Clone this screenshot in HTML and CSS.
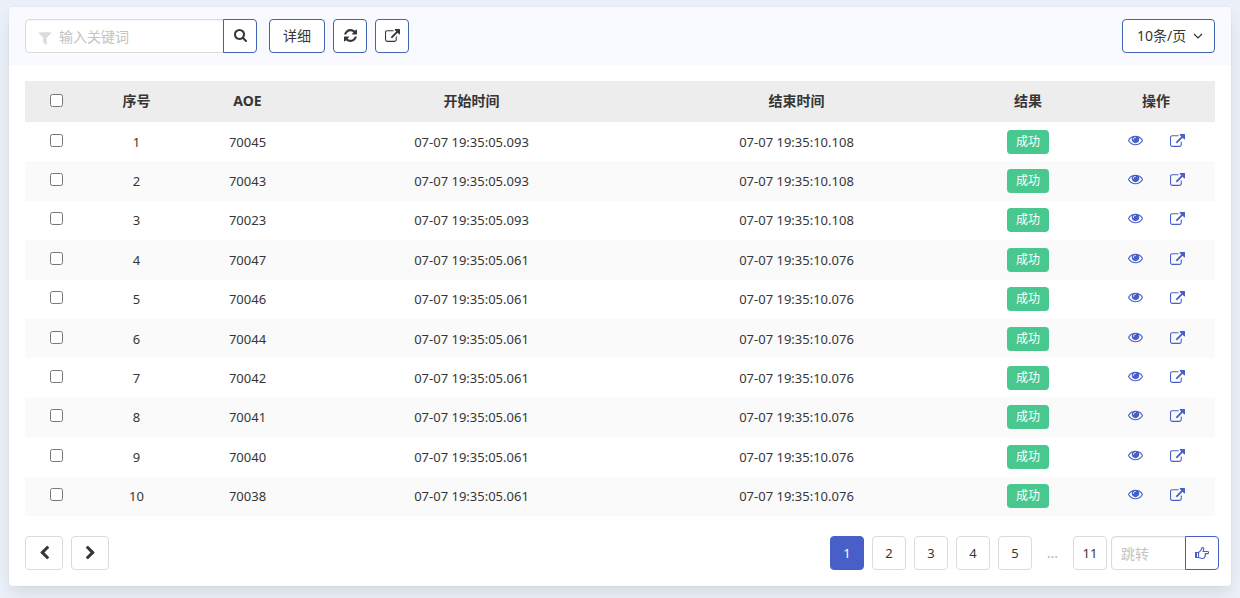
FILE: index.html
```html
<!DOCTYPE html>
<html lang="zh-CN">
<head>
<meta charset="utf-8">
<title>AOE</title>
<link rel="stylesheet" href="styles.css">
</head>
<body>
<svg class="sprite" aria-hidden="true">
  <symbol id="i-filter" viewBox="0 0 1792 1792"><path d="M1595 295q17 41-14 70l-493 493v742q0 42-39 59-13 5-25 5-27 0-45-19l-256-256q-19-19-19-45V858L211 365q-31-29-14-70 17-39 59-39h1280q42 0 59 39z"/></symbol>
  <symbol id="i-search" viewBox="64 128 1664 1664"><path d="M1216 832q0-185-131.5-316.5T768 384 451.5 515.5 320 832t131.5 316.5T768 1280t316.5-131.5T1216 832zm512 832q0 52-38 90t-90 38q-54 0-90-38l-343-342q-179 124-399 124-143 0-273.5-55.5t-225-150-150-225T64 832t55.5-273.5 150-225 225-150T768 128t273.5 55.5 225 150 150 225T1472 832q0 220-124 399l343 343q37 37 37 90z"/></symbol>
  <symbol id="i-refresh" viewBox="128 128 1536 1536"><path d="M1639 1056q0 5-1 7-64 268-268 434.5T892 1664q-146 0-282.5-55T366 1452l-129 129q-19 19-45 19t-45-19-19-45v-448q0-26 19-45t45-19h448q26 0 45 19t19 45-19 45l-137 137q71 66 161 102t187 36q134 0 250-65t186-179q11-17 53-117 8-23 30-23h192q13 0 22.5 9.5t9.5 22.5zm25-800v448q0 26-19 45t-45 19h-448q-26 0-45-19t-19-45 19-45l138-138Q1097 384 896 384q-134 0-250 65T460 628q-11 17-53 117-8 23-30 23H178q-13 0-22.5-9.5T146 736v-7q65-268 270-434.5T896 128q146 0 284 55.5T1425 340l130-129q19-19 45-19t45 19 19 45z"/></symbol>
  <symbol id="i-external" viewBox="0 0 1792 1536"><path d="M1408 928v320q0 119-84.5 203.5T1120 1536H288q-119 0-203.5-84.5T0 1248V416q0-119 84.5-203.5T288 128h704q14 0 23 9t9 23v64q0 14-9 23t-23 9H288q-66 0-113 47t-47 113v832q0 66 47 113t113 47h832q66 0 113-47t47-113V928q0-14 9-23t23-9h64q14 0 23 9t9 23zm384-864v512q0 26-19 45t-45 19-45-19l-176-176-652 652q-10 10-23 10t-23-10L695 983q-10-10-10-23t10-23l652-652-176-176q-19-19-19-45t19-45 45-19h512q26 0 45 19t19 45z"/></symbol>
  <symbol id="i-eye" viewBox="0 384 1792 1152"><path d="M1664 960q-152-236-381-353 61 104 61 225 0 185-131.5 316.5T896 1280t-316.5-131.5T448 832q0-121 61-225-229 117-381 353 133 205 333.5 326.5T896 1408t434.5-121.5T1664 960zM944 576q0-20-14-34t-34-14q-125 0-214.5 89.5T592 832q0 20 14 34t34 14 34-14 14-34q0-86 61-147t147-61q20 0 34-14t14-34zm848 384q0 34-20 69-140 230-376.5 368.5T896 1536t-499.5-139T20 1029q-20-35-20-69t20-69q140-229 376.5-368T896 384t499.5 139T1772 891q20 35 20 69z"/></symbol>
  <symbol id="i-left" viewBox="0 0 1792 1664"><path d="M1427 301l-531 531 531 531q19 19 19 45t-19 45l-166 166q-19 19-45 19t-45-19L429 877q-19-19-19-45t19-45l742-742q19-19 45-19t45 19l166 166q19 19 19 45t-19 45z"/></symbol>
  <symbol id="i-right" viewBox="0 0 1792 1664"><path d="M1363 877l-742 742q-19 19-45 19t-45-19l-166-166q-19-19-19-45t19-45l531-531-531-531q-19-19-19-45t19-45L531 45q19-19 45-19t45 19l742 742q19 19 19 45t-19 45z"/></symbol>
  <symbol id="i-hand" viewBox="0 0 14 12"><path d="M.5 5.500h3v5h-3zM3.500 5.500C5 5 5.500 3.500 6.300 2.700 6.800 2 6.500.600 7.400.600c1.200 0 1.500.900 1.300 1.700L8 4.500h4.500a1 1 0 0 1 0 2.100H10c.8.500.7 1.500 0 1.900.4.700.1 1.300-.6 1.600 0 .9-.6 1.400-1.600 1.400-2 0-2.800-1-4.300-1" fill="none" stroke="currentColor" stroke-width="1.100" stroke-linejoin="round"/><path d="M.5 5.500h1.500v5H.5z"/></symbol>
  <symbol id="i-caret" viewBox="0 0 10 6"><path d="M1 1l4 4 4-4" fill="none" stroke="currentColor" stroke-width="1.200"/></symbol>
</svg>

<main class="card">
  <header class="toolbar">
    <form class="search">
      <svg class="icon search-filter"><use href="#i-filter"/></svg>
      <input class="input search-input" type="text" placeholder="输入关键词" aria-label="输入关键词">
      <button class="button square joined" type="button" aria-label="搜索"><svg class="icon"><use href="#i-search"/></svg></button>
    </form>
    <div class="actions">
      <button class="button" type="button">详细</button>
      <button class="button square" type="button" aria-label="刷新"><svg class="icon"><use href="#i-refresh"/></svg></button>
      <button class="button square" type="button" aria-label="导出"><svg class="icon wide"><use href="#i-external"/></svg></button>
    </div>
    <div class="page-size">
      <select class="select" aria-label="每页条数"><option>10条/页</option><option>20条/页</option><option>50条/页</option></select>
      <svg class="caret"><use href="#i-caret"/></svg>
    </div>
  </header>

  <div class="content">
    <table class="table">
      <colgroup><col class="c-check"><col class="c-no"><col class="c-aoe"><col><col><col class="c-result"><col class="c-ops"></colgroup>
      <thead>
        <tr><th><input class="check" type="checkbox" aria-label="全选"></th><th>序号</th><th>AOE</th><th>开始时间</th><th>结束时间</th><th>结果</th><th>操作</th></tr>
      </thead>
      <tbody id="rows"></tbody>
    </table>
  </div>

  <footer class="footer">
    <div class="steps">
      <button class="button page step" type="button" aria-label="上一页"><svg class="icon"><use href="#i-left"/></svg></button>
      <button class="button page step" type="button" aria-label="下一页"><svg class="icon"><use href="#i-right"/></svg></button>
    </div>
    <nav class="pages" aria-label="分页">
      <button class="button page current" type="button" aria-current="page">1</button>
      <button class="button page" type="button">2</button>
      <button class="button page" type="button">3</button>
      <button class="button page" type="button">4</button>
      <button class="button page" type="button">5</button>
      <span class="ellipsis">...</span>
      <button class="button page" type="button">11</button>
    </nav>
    <form class="jump">
      <input class="input jump-input" type="text" placeholder="跳转" aria-label="跳转">
      <button class="button square joined go" type="button" aria-label="跳转到页"><svg class="icon hand"><use href="#i-hand"/></svg></button>
    </form>
  </footer>
</main>
<script src="app.js"></script>
</body>
</html>
```

FILE: styles.css
```css
* { box-sizing: border-box; }

body {
  margin: 0;
  padding: 7px 9px 12px;
  background: #ebf0f8;
  color: #363636;
  font: 14px/20px "Noto Sans", "Noto Sans CJK SC", sans-serif;
}

.sprite { position: absolute; width: 0; height: 0; }

.card {
  background: #fff;
  border-radius: 4px;
  box-shadow: 0 8px 16px -2px rgba(10, 10, 10, .1), 0 0 0 1px rgba(10, 10, 10, .02);
}

.toolbar {
  display: flex;
  gap: 12px;
  padding: 12px 16px;
  background: #f8faff;
  border-radius: 4px 4px 0 0;
}

.search, .jump { display: flex; position: relative; }
.actions, .steps, .pages { display: flex; gap: 8px; }

.input, .button, .select {
  height: 34px;
  margin: 0;
  border: 1px solid #dbdbdb;
  border-radius: 4px;
  background: #fff;
  color: #363636;
  font: inherit;
}

.input {
  border-radius: 4px 0 0 4px;
  box-shadow: inset 0 1px 2px rgba(10, 10, 10, .05);
  outline: none;
}
.input::placeholder { color: #c3c3c3; }
.search-input { width: 199px; padding: 0 8px 0 33px; }
.jump-input { width: 75px; padding: 0 9px; }

.button {
  display: flex;
  align-items: center;
  justify-content: center;
  padding: 0 13px;
  border-color: #4164b0;
}
.square { width: 34px; padding: 0 0 1px; }
.joined { margin-left: -1px; border-radius: 0 4px 4px 0; }

.icon { display: block; width: 13px; height: 13px; fill: currentColor; }
.wide { width: 15px; }
.search-filter {
  position: absolute;
  top: 11px;
  left: 12px;
  width: 16px;
  height: 16px;
  color: #dbdbdb;
}

.page-size { position: relative; margin-left: auto; }
.select {
  appearance: none;
  display: block;
  padding: 0 27px 0 14px;
  border-color: #4164b0;
}
.caret {
  position: absolute;
  top: 14px;
  right: 12px;
  width: 10px;
  height: 6px;
  pointer-events: none;
}

.content { padding: 16px 16px 20px; }

.table {
  width: 100%;
  height: 435px;
  table-layout: fixed;
  border-collapse: collapse;
  text-align: center;
}
.c-check { width: 62px; }
.c-no { width: 99px; }
.c-aoe { width: 123px; }
.c-result { width: 138px; }
.c-ops { width: 118px; }

.table th, .table td { padding: 0; vertical-align: middle; }
.table thead { background: #ededed; }
.table th { height: 41px; padding-bottom: 2px; font-weight: 700; }
.table td { font-size: 13px; }
.table tbody tr:nth-child(even) { background: #fafafa; }

.check { display: block; width: 13px; height: 13px; margin: 0 auto; }
td .check { margin-bottom: 3px; }

.tag {
  display: inline-block;
  padding: 0 9px;
  border-radius: 4px;
  background: #48c78e;
  color: #fff;
  font-size: 12px;
  line-height: 24px;
  vertical-align: middle;
}

.ops { display: flex; align-items: center; justify-content: center; gap: 27px; padding-bottom: 3px; }
.ops a { color: #485fc7; }
.ops .icon { width: 15px; }

.footer {
  display: flex;
  gap: 4px;
  padding: 0 12px 16px 16px;
}
.pages { margin-left: auto; }
.page { min-width: 34px; padding: 0 8px; border-color: #dbdbdb; font-size: 13px; }
.step { width: 38px; padding: 0 8px 2px; }
.step .icon { width: 15px; height: 15px; }
.current { border-color: #485fc7; background: #485fc7; color: #fff; }
.ellipsis { width: 25px; color: #b5b5b5; line-height: 34px; text-align: center; }
.go { border-color: #485fc7; color: #485fc7; }
.hand { width: 14px; height: 12px; }
```

FILE: app.js
```js
const records = [
  [70045, "093", "108"], [70043, "093", "108"], [70023, "093", "108"],
  [70047, "061", "076"], [70046, "061", "076"], [70044, "061", "076"],
  [70042, "061", "076"], [70041, "061", "076"], [70040, "061", "076"],
  [70038, "061", "076"]
];

document.getElementById("rows").innerHTML = records.map(([aoe, start, end], i) => `
  <tr>
    <td><input class="check" type="checkbox" aria-label="选择 ${i + 1}"></td>
    <td>${i + 1}</td>
    <td>${aoe}</td>
    <td>07-07 19:35:05.${start}</td>
    <td>07-07 19:35:10.${end}</td>
    <td><span class="tag">成功</span></td>
    <td><div class="ops">
      <a href="#" aria-label="查看"><svg class="icon"><use href="#i-eye"/></svg></a>
      <a href="#" aria-label="打开"><svg class="icon"><use href="#i-external"/></svg></a>
    </div></td>
  </tr>`).join("");
```
